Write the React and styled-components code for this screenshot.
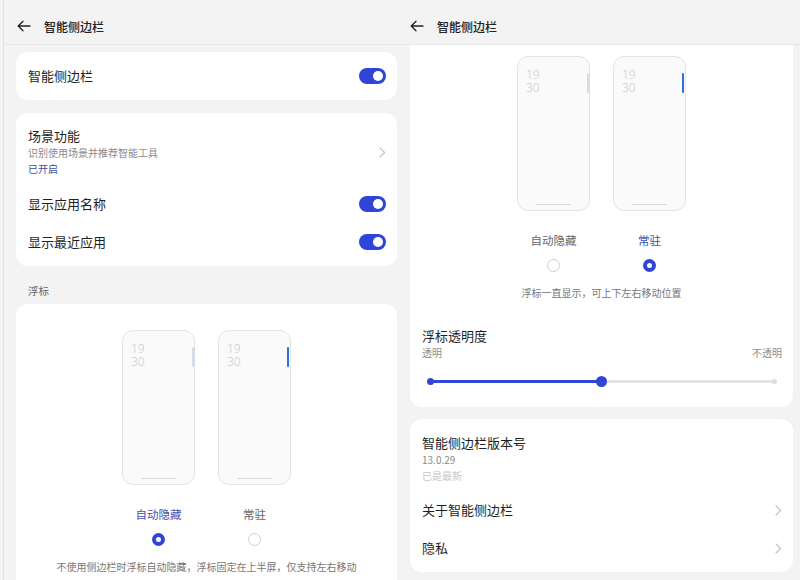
import React from 'react'
import styled, { createGlobalStyle } from 'styled-components'

const BLUE = '#2f45d8'

const GlobalStyle = createGlobalStyle`
  html, body {
    margin: 0;
    padding: 0;
    background: #f3f3f3;
  }
  body {
    font-family: "Noto Sans CJK SC", "Noto Sans", sans-serif;
    color: #1f1f1f;
    overflow: hidden;
  }
  * {
    box-sizing: border-box;
  }
`

const Screen = styled.div`
  display: flex;
  width: 800px;
  height: 580px;
  overflow: hidden;
`

const Pane = styled.div`
  display: flex;
  flex-direction: column;
  height: 100%;
  overflow: hidden;
  ${({ $width }) => ($width ? `flex: 0 0 ${$width}px;` : 'flex: 1;')}
  ${({ $edge }) => $edge && `
    margin-left: 3px;
    border-left: 1px solid #e3e3e3;
  `}
`

const Header = styled.div`
  flex: 0 0 45px;
  display: flex;
  align-items: center;
  gap: 13px;
  padding: 8px 0 0 13px;
  border-bottom: 1px solid #e6e6e6;
`

const HeaderTitle = styled.span`
  font-size: 12px;
  font-weight: 500;
  color: #222;
`

const Body = styled.div`
  flex: 1;
  overflow: hidden;
  padding: ${({ $pad }) => $pad};
`

const Card = styled.div`
  background: #fff;
  border-radius: 12px;
  margin-bottom: ${({ $gap = 13 }) => $gap}px;
  padding: ${({ $pad = '5px 0' }) => $pad};
  ${({ $flatTop }) => $flatTop && `
    border-top-left-radius: 0;
    border-top-right-radius: 0;
  `}
`

const Row = styled.div`
  display: flex;
  align-items: center;
  justify-content: space-between;
  min-height: ${({ $h = 38 }) => $h}px;
  padding: ${({ $pad = '0 11px 0 12px' }) => $pad};
`

const Title = styled.div`
  font-size: 13px;
  line-height: 18px;
  color: #1f1f1f;
`

const Sub = styled.div`
  font-size: 10px;
  line-height: 16px;
  color: ${({ $tone }) => ($tone === 'blue' ? '#3d4ea8' : $tone === 'faint' ? '#c6c6c6' : '#8a8a8a')};
`

const Toggle = styled.span`
  position: relative;
  width: 27px;
  height: 16px;
  border-radius: 8px;
  background: ${BLUE};
  &::after {
    content: '';
    position: absolute;
    top: 3px;
    right: 3px;
    width: 10px;
    height: 10px;
    border-radius: 50%;
    background: #fff;
  }
`

const SectionLabel = styled.div`
  font-size: 10.5px;
  line-height: 14px;
  color: #666;
  padding: 18px 12px 6px;
`

const Options = styled.div`
  display: flex;
  justify-content: center;
  gap: 23px;
  padding-top: ${({ $top }) => $top}px;
`

const Option = styled.div`
  display: flex;
  flex-direction: column;
  align-items: center;
`

const Phone = styled.div`
  position: relative;
  display: flex;
  flex-direction: column;
  width: 73px;
  height: 155px;
  border: 1.5px solid #e4e4e4;
  border-radius: 11px;
  background: #fafafa;
  padding: 11px 0 5px 8px;
`

const Clock = styled.div`
  font-family: "Noto Sans", "DejaVu Sans", sans-serif;
  font-weight: 300;
  font-size: 12px;
  line-height: 13px;
  color: #cbcbcb;
  white-space: pre-line;
`

const Handle = styled.span`
  position: absolute;
  top: 16px;
  right: ${({ $on }) => ($on ? '1px' : '-1px')};
  width: ${({ $on }) => ($on ? '2.5px' : '3px')};
  height: 20px;
  border-radius: 2px;
  background: ${({ $on }) => ($on ? '#2b6fd8' : '#d6dde6')};
`

const HomeBar = styled.span`
  margin: auto 0 0 -8px;
  align-self: center;
  width: 35px;
  height: 1.5px;
  border-radius: 1px;
  background: #d9d9d9;
`

const OptionLabel = styled.div`
  margin-top: 21px;
  font-size: 11.5px;
  line-height: 16px;
  color: ${({ $on }) => ($on ? '#4050b0' : '#666')};
`

const Radio = styled.span`
  margin-top: 11px;
  width: 13px;
  height: 13px;
  border-radius: 50%;
  border: ${({ $on }) => ($on ? `4px solid ${BLUE}` : '1px solid #cfcfcf')};
  background: #fff;
`

const Desc = styled.div`
  margin-top: 14px;
  text-align: center;
  font-size: 10px;
  line-height: 14px;
  color: #767676;
`

const SliderBlock = styled.div`
  padding: 27px 11px 16px 12px;
`

const Ends = styled.div`
  display: flex;
  justify-content: space-between;
  margin-top: 1px;
  font-size: 10px;
  line-height: 14px;
  color: #8a8a8a;
`

const TrackWrap = styled.div`
  display: flex;
  align-items: center;
  height: 20px;
  margin: 11px 7px 0 8px;
`

const Track = styled.div`
  position: relative;
  flex: 1;
  height: 3px;
  border-radius: 2px;
  background: #e3e3e3;
  &::after {
    content: '';
    position: absolute;
    right: -2px;
    top: -1px;
    width: 5px;
    height: 5px;
    border-radius: 50%;
    background: #dcdcdc;
  }
`

const Fill = styled.div`
  position: relative;
  height: 3px;
  border-radius: 2px;
  background: ${BLUE};
  &::before {
    content: '';
    position: absolute;
    left: -3px;
    top: -2px;
    width: 7px;
    height: 7px;
    border-radius: 50%;
    background: ${BLUE};
  }
  &::after {
    content: '';
    position: absolute;
    right: -5.5px;
    top: -4px;
    width: 11px;
    height: 11px;
    border-radius: 50%;
    background: ${BLUE};
  }
`

const InfoBlock = styled.div`
  padding: 10px 12px 7px;
`

const BackArrow = () => (
  <svg width="14" height="12" viewBox="0 0 14 12" fill="none" stroke="#222" strokeWidth="1.3" strokeLinecap="round" strokeLinejoin="round">
    <path d="M13 6H1.5M6 1.2L1.2 6L6 10.8" />
  </svg>
)

const Chevron = () => (
  <svg width="7" height="11" viewBox="0 0 7 11" fill="none" stroke="#c4c4c4" strokeWidth="1.2" strokeLinecap="round" strokeLinejoin="round">
    <path d="M1 1l4.6 4.5L1 10" />
  </svg>
)

const modes = [
  { key: 'auto', label: '自动隐藏' },
  { key: 'fixed', label: '常驻' },
]

const ModePicker = ({ selected, top, note }) => (
  <>
    <Options $top={top}>
      {modes.map((m) => (
        <Option key={m.key}>
          <Phone>
            <Clock>{'19\n30'}</Clock>
            <Handle $on={m.key === 'fixed'} />
            <HomeBar />
          </Phone>
          <OptionLabel $on={m.key === selected}>{m.label}</OptionLabel>
          <Radio $on={m.key === selected} />
        </Option>
      ))}
    </Options>
    <Desc>{note}</Desc>
  </>
)

const PaneHeader = () => (
  <Header>
    <BackArrow />
    <HeaderTitle>智能侧边栏</HeaderTitle>
  </Header>
)

export default function App() {
  const opacity = 0.497

  return (
    <Screen>
      <GlobalStyle />
      <Pane $width={394} $edge>
        <PaneHeader />
        <Body $pad="7px 0 0 12px">
          <Card>
            <Row $h={38}>
              <Title>智能侧边栏</Title>
              <Toggle />
            </Row>
          </Card>
          <Card $gap={0}>
            <Row $pad="9px 11px 8px 12px">
              <div>
                <Title>场景功能</Title>
                <Sub>识别使用场景并推荐智能工具</Sub>
                <Sub $tone="blue">已开启</Sub>
              </div>
              <Chevron />
            </Row>
            <Row>
              <Title>显示应用名称</Title>
              <Toggle />
            </Row>
            <Row>
              <Title>显示最近应用</Title>
              <Toggle />
            </Row>
          </Card>
          <SectionLabel>浮标</SectionLabel>
          <Card $pad="0 0 20px">
            <ModePicker
              selected="auto"
              top={26}
              note="不使用侧边栏时浮标自动隐藏，浮标固定在上半屏，仅支持左右移动"
            />
          </Card>
        </Body>
      </Pane>

      <Pane>
        <PaneHeader />
        <Body $pad="0 7px 0 13px">
          <Card $flatTop $gap={12} $pad="0">
            <ModePicker selected="fixed" top={11} note="浮标一直显示，可上下左右移动位置" />
            <SliderBlock>
              <Title>浮标透明度</Title>
              <Ends>
                <span>透明</span>
                <span>不透明</span>
              </Ends>
              <TrackWrap>
                <Track>
                  <Fill style={{ width: `${opacity * 100}%` }} />
                </Track>
              </TrackWrap>
            </SliderBlock>
          </Card>
          <Card $gap={0}>
            <InfoBlock>
              <Title>智能侧边栏版本号</Title>
              <Sub>13.0.29</Sub>
              <Sub $tone="faint">已是最新</Sub>
            </InfoBlock>
            <Row>
              <Title>关于智能侧边栏</Title>
              <Chevron />
            </Row>
            <Row>
              <Title>隐私</Title>
              <Chevron />
            </Row>
          </Card>
        </Body>
      </Pane>
    </Screen>
  )
}
